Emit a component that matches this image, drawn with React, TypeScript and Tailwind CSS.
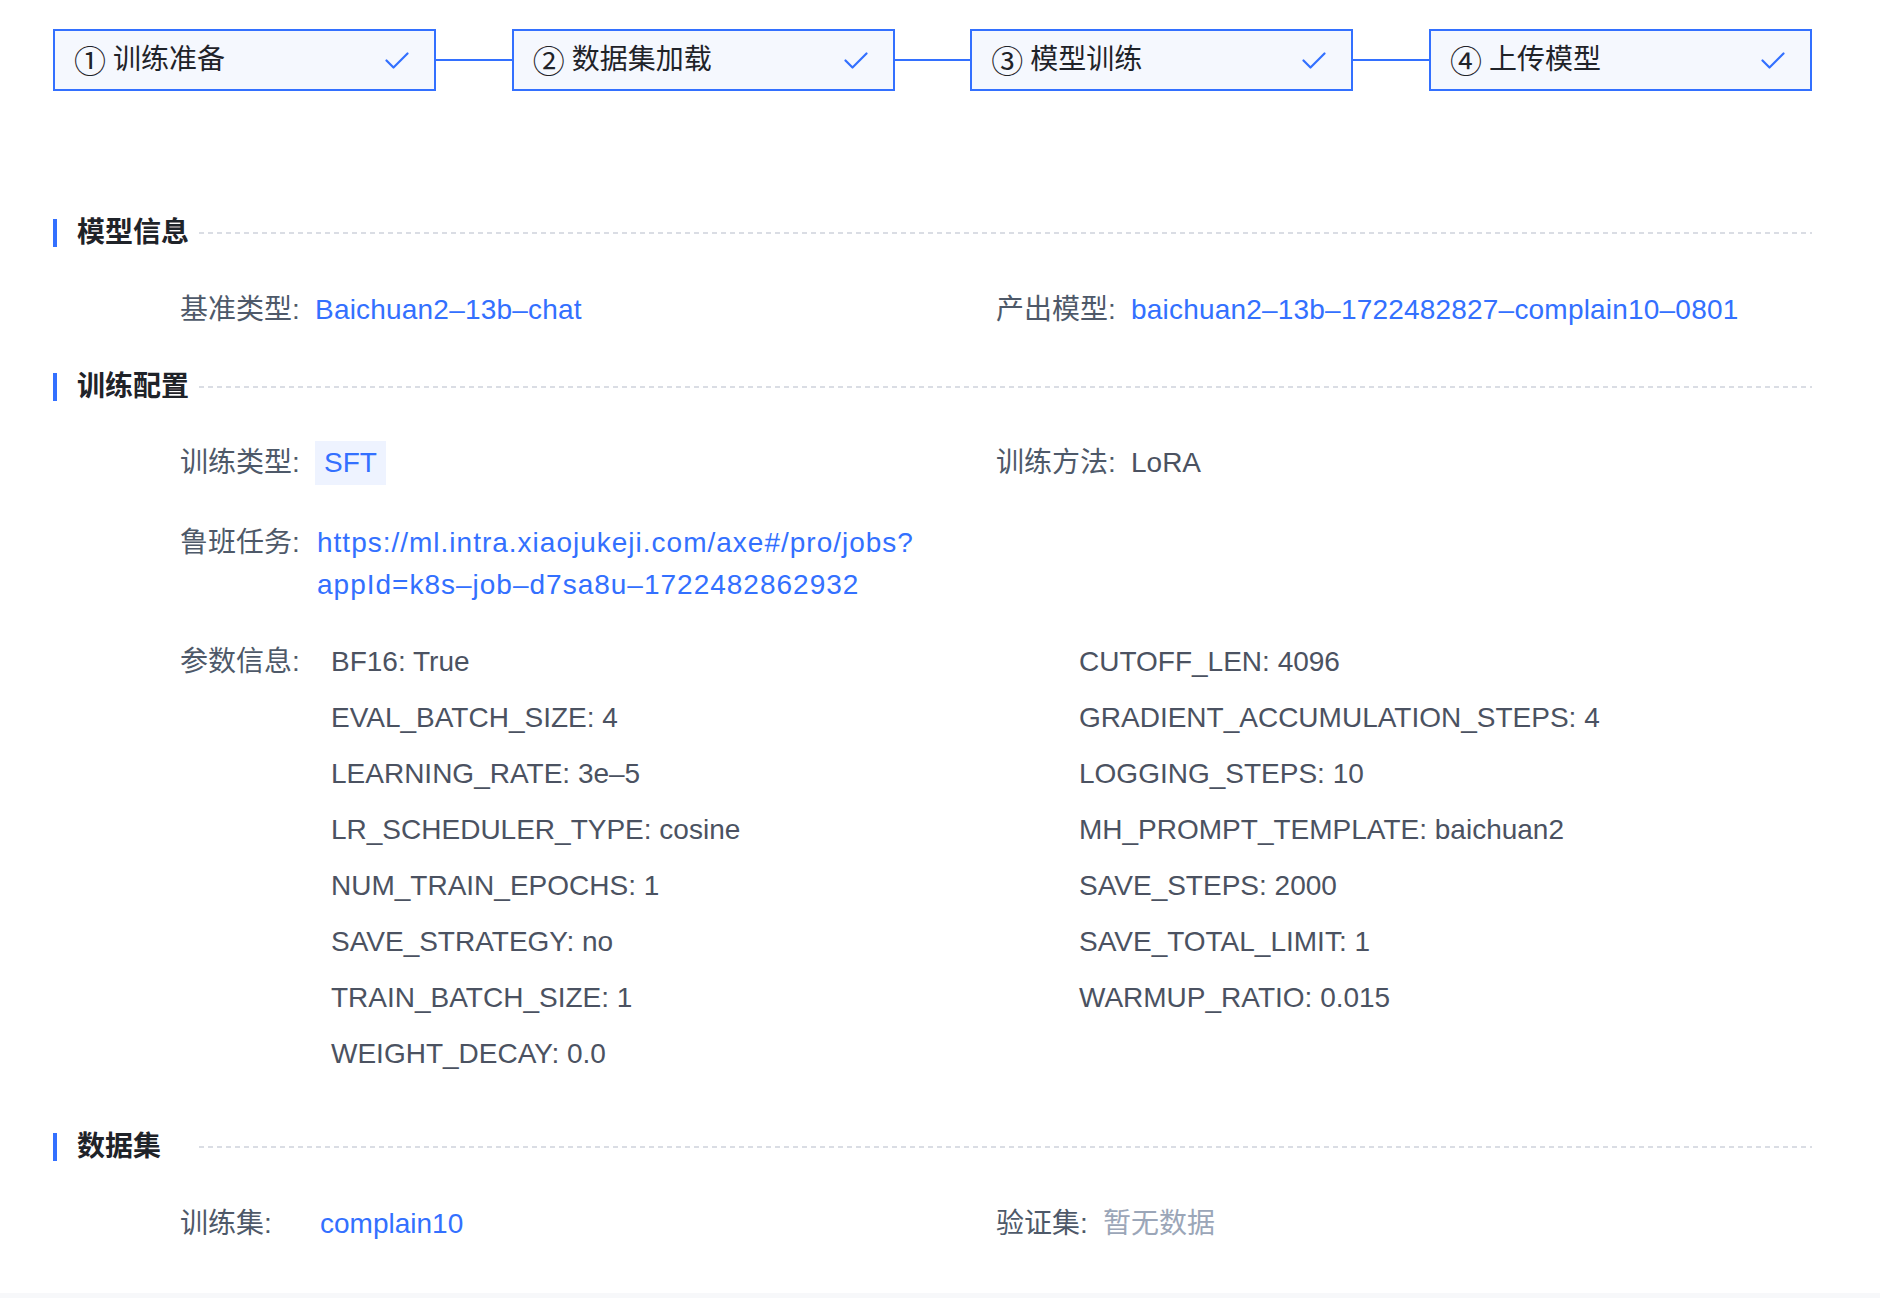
import React from "react";

const FONT = "font-['Liberation_Sans','Noto_Sans_CJK_SC',sans-serif]";

const steps = [
    ["①", "训练准备"],
    ["②", "数据集加载"],
    ["③", "模型训练"],
    ["④", "上传模型"],
];

const params: [string, string][] = [
    ["BF16", "True"],
    ["CUTOFF_LEN", "4096"],
    ["EVAL_BATCH_SIZE", "4"],
    ["GRADIENT_ACCUMULATION_STEPS", "4"],
    ["LEARNING_RATE", "3e–5"],
    ["LOGGING_STEPS", "10"],
    ["LR_SCHEDULER_TYPE", "cosine"],
    ["MH_PROMPT_TEMPLATE", "baichuan2"],
    ["NUM_TRAIN_EPOCHS", "1"],
    ["SAVE_STEPS", "2000"],
    ["SAVE_STRATEGY", "no"],
    ["SAVE_TOTAL_LIMIT", "1"],
    ["TRAIN_BATCH_SIZE", "1"],
    ["WARMUP_RATIO", "0.015"],
    ["WEIGHT_DECAY", "0.0"],
];

const Check = () => (
    <svg width="24" height="17" viewBox="0 0 24 17" fill="none">
        <polyline
            points="1.5,8.5 8.5,15.5 22.5,1.5"
            stroke="#3370ff"
            strokeWidth="2.2"
            strokeLinecap="round"
            strokeLinejoin="round"
        />
    </svg>
);

const SectionTitle = ({ title }: { title: string }) => (
    <div className="flex items-center h-[40px]">
        <div className="w-[4px] h-[28px] bg-[#3370ff]" />
        <div className="w-[122px] ml-[20px] text-[28px] font-bold text-[#1f2329] leading-[40px]">
            {title}
        </div>
        <div className="flex-1 h-[2px] bg-[repeating-linear-gradient(to_right,#dadde4_0,#dadde4_5px,transparent_5px,transparent_9px)]" />
    </div>
);

const Label = ({ children }: { children: React.ReactNode }) => (
    <span className="text-[#4e5969]">{children}</span>
);

const App = () => {
    return (
        <div className={`${FONT} bg-[#f7f8fa] min-h-screen`}>
            <div className="bg-white pl-[53px] pr-[68px] pt-[29px] pb-[49px] text-[28px] leading-[40px]">
                {/* steps */}
                <div className="flex items-center">
                    {steps.map(([n, s], i) => (
                        <React.Fragment key={s}>
                            {i > 0 && <div className="flex-1 h-[2px] bg-[#3370ff]" />}
                            <div className="w-[383px] h-[62px] border-2 border-[#3370ff] bg-[#f5f8fe] flex items-center justify-between pl-[19px] pr-[25px]">
                                <span className="text-[#1f2329] flex items-center">
                                    <span className="font-['Noto_Sans_CJK_SC'] text-[32px] leading-[40px] mr-[7px] -mt-[3px]">
                                        {n}
                                    </span>
                                    {s}
                                </span>
                                <Check />
                            </div>
                        </React.Fragment>
                    ))}
                </div>

                <div className="mt-[122px]">
                    <SectionTitle title="模型信息" />
                </div>
                <div className="grid grid-cols-2 pl-[127px] mt-[37px]">
                    <div className="flex">
                        <Label>
                            <span className="inline-block w-[135px]">基准类型:</span>
                        </Label>
                        <span className="text-[#3370ff] tracking-[0.2px]">Baichuan2–13b–chat</span>
                    </div>
                    <div className="flex">
                        <Label>
                            <span className="inline-block w-[135px]">产出模型:</span>
                        </Label>
                        <span className="text-[#3370ff] tracking-[0.2px]">
                            baichuan2–13b–1722482827–complain10–0801
                        </span>
                    </div>
                </div>

                <div className="mt-[37px]">
                    <SectionTitle title="训练配置" />
                </div>
                <div className="grid grid-cols-2 pl-[127px] mt-[34px] items-center">
                    <div className="flex items-center">
                        <Label>
                            <span className="inline-block w-[135px]">训练类型:</span>
                        </Label>
                        <span className="h-[44px] px-[9px] bg-[#eef3ff] text-[#3370ff] leading-[44px]">
                            SFT
                        </span>
                    </div>
                    <div className="flex">
                        <Label>
                            <span className="inline-block w-[135px]">训练方法:</span>
                        </Label>
                        <span className="text-[#4b5261]">LoRA</span>
                    </div>
                </div>
                <div className="flex pl-[127px] mt-[37px] leading-[42px]">
                    <Label>
                        <span className="inline-block w-[137px] shrink-0">鲁班任务:</span>
                    </Label>
                    <span className="text-[#3370ff] w-[620px] tracking-[1px]">
                        https://ml.intra.xiaojukeji.com/axe#/pro/jobs?
                        <br />
                        appId=k8s–job–d7sa8u–1722482862932
                    </span>
                </div>
                <div className="flex pl-[127px] mt-[28px] leading-[56px]">
                    <Label>
                        <span className="inline-block w-[151px] shrink-0">参数信息:</span>
                    </Label>
                    <div className="grid grid-cols-[748px_1fr] flex-1 text-[#4b5261]">
                        {params.map(([k, v]) => (
                            <div key={k}>
                                {k}: {v}
                            </div>
                        ))}
                    </div>
                </div>

                <div className="mt-[45px]">
                    <SectionTitle title="数据集" />
                </div>
                <div className="grid grid-cols-2 pl-[127px] mt-[37px]">
                    <div className="flex">
                        <Label>
                            <span className="inline-block w-[140px]">训练集:</span>
                        </Label>
                        <span className="text-[#3370ff]">complain10</span>
                    </div>
                    <div className="flex">
                        <Label>
                            <span className="inline-block w-[107px]">验证集:</span>
                        </Label>
                        <span className="text-[#9ba6b8]">暂无数据</span>
                    </div>
                </div>
            </div>
        </div>
    );
};

export default App;
